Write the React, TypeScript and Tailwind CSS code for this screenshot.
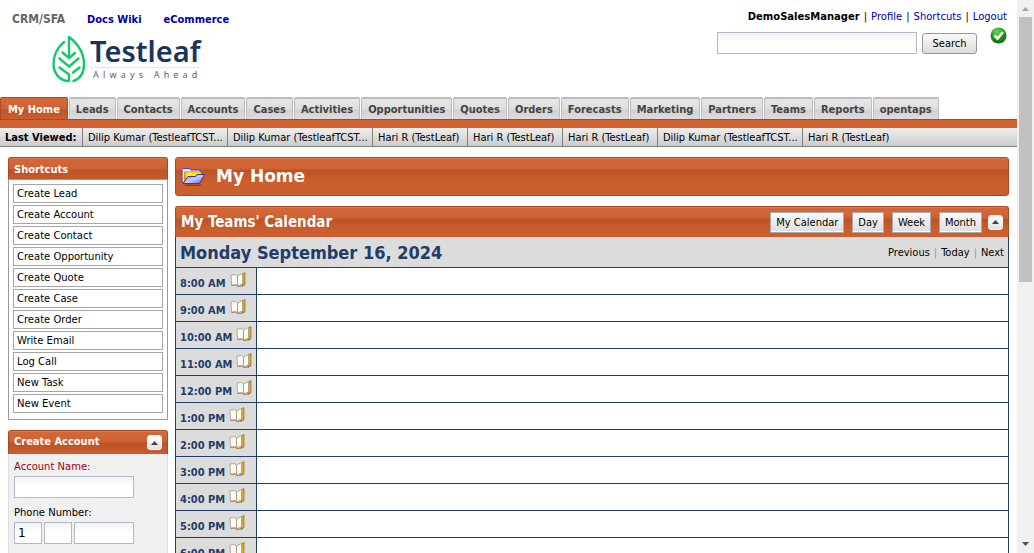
import React from "react";

const tahoma = "font-['DejaVu_Sans_Condensed','DejaVu_Sans',sans-serif]";
const verdana = "font-['DejaVu_Sans',sans-serif]";

const tabs = [
  "My Home", "Leads", "Contacts", "Accounts", "Cases", "Activities", "Opportunities", "Quotes",
  "Orders", "Forecasts", "Marketing", "Partners", "Teams", "Reports", "opentaps",
];

const lastViewed = [
  "Dilip Kumar (TestleafTCST...", "Dilip Kumar (TestleafTCST...", "Hari R (TestLeaf)", "Hari R (TestLeaf)",
  "Hari R (TestLeaf)", "Dilip Kumar (TestleafTCST...", "Hari R (TestLeaf)",
];

const shortcuts = [
  "Create Lead", "Create Account", "Create Contact", "Create Opportunity", "Create Quote", "Create Case",
  "Create Order", "Write Email", "Log Call", "New Task", "New Event",
];

const hours = [
  "8:00 AM", "9:00 AM", "10:00 AM", "11:00 AM", "12:00 PM", "1:00 PM", "2:00 PM", "3:00 PM", "4:00 PM",
  "5:00 PM", "6:00 PM",
];

const orangePanel =
  "border border-[#a94a20] shadow-[inset_0_1px_0_#d9794e] bg-[linear-gradient(#d46838_0px,#cf6233_11px,#bb5228_12px,#cc5f2e_24px,#cc5f2e_100%)]";
const field =
  "border border-[#b5b8c8] bg-[linear-gradient(#f1f4f4,#ffffff_10px)] text-xs text-black outline-none";

function LeafLogo() {
  return (
    <svg width="34" height="48" viewBox="0 0 34 48" fill="none" stroke="#14c96b" strokeWidth="2.4" strokeLinejoin="round" strokeLinecap="round">
      <path d="M12 7C5 13 1.500 21 1.500 29c0 9 6 17 15.500 17V39.500L7.500 32.500" />
      <path d="M17 22.500V2c8.500 6.500 15 16 15 27 0 9.500-4.500 15-10.500 17" />
      <path d="M10.500 17.500 17 23l6-5" />
      <path d="M7.500 23.500 17 31.500l9.500-8" />
      <path d="M21 37.500l6.500-5" />
    </svg>
  );
}

function CheckIcon() {
  return (
    <svg width="17" height="17" viewBox="0 0 17 17">
      <defs>
        <radialGradient id="green" cx="40%" cy="25%" r="75%">
          <stop offset="0" stopColor="#6fd85a" />
          <stop offset="0.5" stopColor="#22a51e" />
          <stop offset="1" stopColor="#08680f" />
        </radialGradient>
      </defs>
      <circle cx="8.500" cy="8.500" r="8" fill="url(#green)" />
      <path d="M4.500 8.500 7.500 11.500 13 5" fill="none" stroke="#fff" strokeWidth="2.600" />
    </svg>
  );
}

function FolderIcon() {
  return (
    <svg width="25" height="20" viewBox="0 0 25 20">
      <defs>
        <linearGradient id="folder" x1="0" y1="0" x2="1" y2="1">
          <stop offset="0" stopColor="#6d74e6" />
          <stop offset="0.5" stopColor="#c9ccff" />
          <stop offset="1" stopColor="#5a60d4" />
        </linearGradient>
      </defs>
      <path d="M3 17.500h17l2-1-3 2.500H5z" fill="#8a3f24" />
      <path d="M1 2.500 2 1.500h7L10 3h9v5L4 15.500 1 15z" fill="#dfe1ff" stroke="#4449b4" />
      <path d="M3 4.500h16.500V9L4 15H3z" fill="#ff8a00" />
      <path d="M4.500 5.500H20V9L5 14.500z" fill="#fff000" />
      <path d="M8.500 5.500h2l-3 6-2 2z" fill="#fffbd0" />
      <path d="M2 16.500 7 9.500h7.500L16 7.500h7.500L18.500 16.500z" fill="url(#folder)" stroke="#3438a0" />
    </svg>
  );
}

function BookIcon() {
  return (
    <svg width="17" height="16" viewBox="0 0 17 16" className="shrink-0">
      <path d="M12 2 15 0.500v12l-3 2z" fill="#d6a72a" stroke="#987018" strokeWidth="0.700" />
      <path d="M1.500 13.500 6 13l1.500 1.500L12 14l3-1.500" fill="none" stroke="#8d7a55" />
      <path d="M1 3 5.500 2.500 7.500 4V13.800L6 12.500 1.500 13z" fill="#fcfaf5" stroke="#aaa195" strokeWidth="0.900" />
      <path d="M7.500 4 12.500 1.500v10.500L7.500 13.800z" fill="#fffdf8" stroke="#aaa195" strokeWidth="0.900" />
      <path d="M7.500 4v9.500" stroke="#b09c78" />
    </svg>
  );
}

function CollapseButton({ label }: { label: string }) {
  return (
    <button aria-label={label} className="flex h-[15px] w-[15px] items-center justify-center rounded-[3px] border border-[#f7f4f2] bg-[linear-gradient(#ffffff,#e2e2e2)]">
      <svg width="7" height="4" viewBox="0 0 7 4"><path d="M0 4 3.500 0 7 4z" fill="#444" /></svg>
    </button>
  );
}

function Header() {
  return (
    <header className="flex h-[97px] shrink-0 justify-between">
      <div>
        <nav className={`flex gap-[22px] pt-[13px] pl-3 text-[11px] leading-[13px] font-bold ${tahoma}`}>
          <span className="text-xs leading-[13px] text-[#666]">CRM/SFA</span>
          <a href="#wiki" className="text-[#0000a8]">Docs Wiki</a>
          <a href="#shop" className="text-[#0000a8]">eCommerce</a>
        </nav>
        <div className="flex gap-1 pt-[9px] pl-[52px]">
          <LeafLogo />
          <div className="font-['Noto_Sans',sans-serif]">
            <div className="border-b border-[#e8e8e8] text-[29px] leading-[32px] font-semibold text-[#18365a]">Testleaf</div>
            <div className="flex justify-between px-[3px] pt-px text-[9px] leading-[11px] text-[#50637c]">
              {"Always Ahead".split("").map((c, i) => <span key={i} className="whitespace-pre">{c}</span>)}
            </div>
          </div>
        </div>
      </div>
      <div className={`pr-[10px] pt-[10px] text-[10px] leading-[13px] ${verdana}`}>
        <div className="flex justify-end gap-1">
          <b>DemoSalesManager</b><span>|</span>
          <a href="#profile" className="text-[#0000a8]">Profile</a><span>|</span>
          <a href="#shortcuts" className="text-[#0000a8]">Shortcuts</a><span>|</span>
          <a href="#logout" className="text-[#0000a8]">Logout</a>
        </div>
        <form className="flex items-start justify-end pt-1" onSubmit={(e) => e.preventDefault()}>
          <input aria-label="Search" className={`mt-[5px] h-[22px] w-[200px] px-1 ${field}`} />
          <button className={`mt-[6px] ml-[5px] h-[21px] w-[55px] rounded-[3px] border border-[#999] bg-[linear-gradient(#fafafa,#dcdcdc)] text-[11px] ${tahoma}`}>Search</button>
          <span className="ml-[13px]"><CheckIcon /></span>
        </form>
      </div>
    </header>
  );
}

function Tabs() {
  return (
    <nav className={`flex h-[22px] shrink-0 gap-px text-[11px] font-bold ${tahoma}`}>
      {tabs.map((t, i) => (
        <a
          key={t}
          href="#tab"
          className={
            i === 0
              ? "flex items-center rounded-t-[2px] border border-b-0 border-[#b04a20] bg-[linear-gradient(#d46838_0px,#cf6233_11px,#bb5228_12px,#cc5f2e)] px-[7px] pt-[3px] text-white"
              : "flex items-center rounded-t-[2px] border border-t-2 border-b-0 border-[#bcbcbc] bg-[linear-gradient(#e6e6e6_0px,#dfdfdf_10px,#d2d2d2_11px,#dcdcdc)] px-[6px] pt-[3px] text-[#444]"
          }
        >
          {t}
        </a>
      ))}
    </nav>
  );
}

function Sidebar() {
  return (
    <aside className={`w-40 shrink-0 text-[10px] ${verdana}`}>
      <section>
        <h2 className={`h-[22px] rounded-t-[3px] border-b-0 px-[5px] text-[11px] leading-[23px] font-bold text-white ${orangePanel} ${tahoma}`}>Shortcuts</h2>
        <ul className="flex flex-col gap-[2px] border border-[#999] px-1 pt-1 pb-[6px]">
          {shortcuts.map((s) => (
            <li key={s}>
              <a href="#shortcut" className="block h-[19px] border border-[#a6a6a6] px-[3px] leading-[18px] text-black">{s}</a>
            </li>
          ))}
        </ul>
      </section>
      <section className="mt-[10px]">
        <div className={`flex h-6 items-center justify-between rounded-t-[3px] border-b-0 px-[5px] text-white ${orangePanel}`}>
          <h2 className={`text-[11px] font-bold ${tahoma}`}>Create Account</h2>
          <CollapseButton label="Collapse Create Account" />
        </div>
        <form className="border-x border-[#ddd] bg-[#f0f0f0] px-[5px] pt-[6px] pb-10 leading-[13px]">
          <label htmlFor="account" className="block text-[#a00010]">Account Name:</label>
          <input id="account" className={`mt-[3px] block h-[22px] w-[120px] px-1 ${field}`} />
          <label htmlFor="country" className="mt-2 block">Phone Number:</label>
          <div className="mt-[3px] flex gap-[2px]">
            <input id="country" defaultValue="1" className={`h-[22px] w-7 px-[3px] ${field}`} />
            <input aria-label="Area code" className={`h-[22px] w-7 px-[3px] ${field}`} />
            <input aria-label="Number" className={`h-[22px] w-[60px] px-[3px] ${field}`} />
          </div>
        </form>
      </section>
    </aside>
  );
}

function Calendar() {
  return (
    <section className="mt-[10px]">
      <div className={`flex h-[31px] items-center justify-between rounded-t-[3px] border-b-0 px-[5px] text-white ${orangePanel}`}>
        <h2 className={`text-[15px] font-bold ${tahoma}`}>My Teams' Calendar</h2>
        <div className="flex items-center gap-[6px]">
          <div className="flex gap-2">
            {["My Calendar", "Day", "Week", "Month"].map((b) => (
              <button key={b} className={`h-[21px] border border-[#aaa] bg-[linear-gradient(#fafafa,#dddddd)] px-[5px] text-[11px] leading-[19px] text-black shadow-[inset_0_-1px_0_#fff] ${tahoma}`}>{b}</button>
            ))}
          </div>
          <CollapseButton label="Collapse calendar" />
        </div>
      </div>
      <div className="flex h-[30px] items-center justify-between border-x border-[#1f3d68] bg-[#dcdcdc] px-1">
        <h3 className={`text-[18px] font-bold text-[#1f3d68] ${tahoma}`}>Monday September 16, 2024</h3>
        <div className={`flex gap-1 pt-[2px] text-[11px] ${tahoma}`}>
          <a href="#previous">Previous</a><span className="text-[#8a9ab5]">|</span>
          <a href="#today">Today</a><span className="text-[#8a9ab5]">|</span>
          <a href="#next">Next</a>
        </div>
      </div>
      <table className="w-full table-fixed border-collapse border border-[#1f3d68]">
        <tbody>
          {hours.map((h) => (
            <tr key={h} className="h-[27px]">
              <th scope="row" className="w-[81px] border border-[#1f3d68] bg-[#dcdcdc] p-0">
                <div className={`flex h-[26px] items-start gap-1 pl-1 text-[11px] text-[#1f3d68] ${tahoma}`}>
                  <span className="pt-[9px] leading-[14px]">{h}</span>
                  <span className="pt-1"><BookIcon /></span>
                </div>
              </th>
              <td className="border border-[#1f3d68] bg-white p-0" />
            </tr>
          ))}
        </tbody>
      </table>
    </section>
  );
}

export default function App() {
  return (
    <div className="flex h-screen overflow-hidden bg-white text-black">
      <div className="flex min-w-0 flex-1 flex-col overflow-hidden whitespace-nowrap">
        <Header />
        <Tabs />
        <div className="h-2 shrink-0 border-t border-[#a94a20] bg-[#d06232]" />
        <div className={`flex h-5 shrink-0 border-y border-[#808080] bg-[linear-gradient(#eeeeee,#cccccc)] text-[11px] leading-[19px] ${tahoma}`}>
          <b className="w-[82px] pl-[5px]">Last Viewed:</b>
          {lastViewed.map((v, i) => (
            <a key={i} href="#viewed" className={`border-l border-[#808080] px-[5px] ${v.startsWith("Hari") ? "w-[95px]" : "w-[145px]"}`}>{v}</a>
          ))}
        </div>
        <div className="flex items-start gap-[7px] px-2 pt-[10px]">
          <Sidebar />
          <main className="min-w-0 flex-1">
            <div className={`flex h-[39px] items-center gap-[10px] rounded-[3px] px-[5px] text-white ${orangePanel}`}>
              <FolderIcon />
              <h1 className={`text-[17px] font-bold ${verdana}`}>My Home</h1>
            </div>
            <Calendar />
          </main>
        </div>
      </div>
      <div aria-hidden="true" className="flex w-[17px] shrink-0 flex-col items-center bg-[#f0f0f0]">
        <svg width="17" height="17" viewBox="0 0 17 17"><path d="M5 11 8.500 7 12 11z" fill="#a3a3a3" /></svg>
        <div className="flex w-full flex-1 flex-col items-center"><div className="h-[51%] w-[13px] bg-[#c1c1c1]" /></div>
        <svg width="17" height="17" viewBox="0 0 17 17"><path d="M5 6 8.500 10 12 6z" fill="#505050" /></svg>
      </div>
    </div>
  );
}
